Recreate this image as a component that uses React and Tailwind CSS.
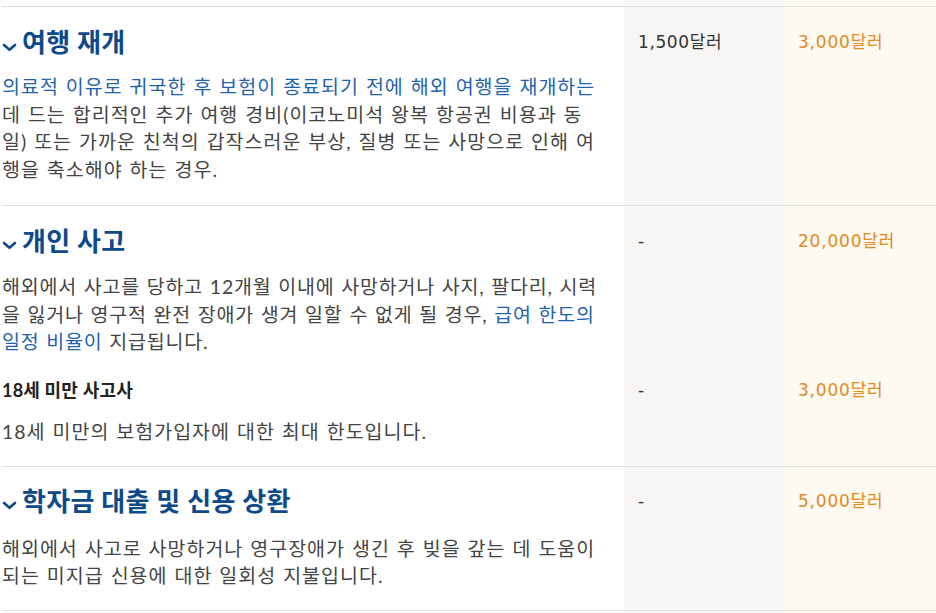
import React from "react";

const Chevron = () => (
  <svg
    width="15"
    height="9"
    viewBox="0 0 15 9"
    className="mr-[5px] mt-[10px] shrink-0"
    fill="none"
    stroke="#0d4a8a"
    strokeWidth="2.6"
    strokeLinecap="round"
    strokeLinejoin="round"
  >
    <path d="M2 2 L7.5 6.8 L13 2" />
  </svg>
);

const Link = ({ children }) => (
  <a href="#" className="text-[#1f63ad]">
    {children}
  </a>
);

const valueFont = { fontFamily: "'DejaVu Sans', 'Noto Sans CJK KR', sans-serif" };

function Cells({ left, mid, right, border, pt = "pt-[19px]", pb = "pb-[20px]" }) {
  const line = border ? "border-t border-[#dedede]" : "";
  return (
    <>
      <div className={`${line} ${pt} ${pb} pr-[20px]`}>{left}</div>
      <div
        className={`${line} ${pt} bg-[#f7f6f4] pl-[14px] text-[17px] leading-[32px] tracking-[0.6px] text-[#333]`}
        style={valueFont}
      >
        {mid}
      </div>
      <div
        className={`${line} ${pt} bg-[#fef9f1] pl-[15px] text-[17px] leading-[32px] tracking-[0.8px] text-[#e08a1e]`}
        style={valueFont}
      >
        {right}
      </div>
    </>
  );
}

const Title = ({ children }) => (
  <h3 className="flex items-center text-[26px] leading-[32px] font-bold tracking-[0.3px] text-[#0d4a8a]">
    <Chevron />
    {children}
  </h3>
);

const Body = ({ children, className = "", tracking = "tracking-[1px]" }) => (
  <p
    className={`whitespace-nowrap text-[19.5px] leading-[27.7px] text-[#444] ${tracking} [word-spacing:1px] ${className}`}
  >
    {children}
  </p>
);

export default function App() {
  return (
    <div
      className="w-[936px] h-[613px] overflow-hidden bg-white pl-[2px]"
      style={{ fontFamily: "Lato, 'Noto Sans CJK KR', sans-serif" }}
    >
      <div className="grid grid-cols-[622px_159px_153px]">
        {/* top spacer */}
        <div className="h-[6px]" />
        <div className="h-[6px] bg-[#f7f6f4]" />
        <div className="h-[6px] bg-[#fef9f1]" />

        <Cells
          border
          pb="pb-[21px]"
          left={
            <>
              <Title>여행 재개</Title>
              <Body className="mt-[15px]">
                <Link>의료적 이유로 귀국한 후 보험이 종료되기 전에 해외 여행을 재개하는</Link>
                <br />
                데 드는 합리적인 추가 여행 경비(이코노미석 왕복 항공권 비용과 동
                <br />
                일) 또는 가까운 친척의 갑작스러운 부상, 질병 또는 사망으로 인해 여
                <br />
                행을 축소해야 하는 경우.
              </Body>
            </>
          }
          mid="1,500달러"
          right="3,000달러"
        />

        <Cells
          border
          pb="pb-0"
          left={
            <>
              <Title>개인 사고</Title>
              <Body className="mt-[16px]" tracking="tracking-[0.8px]">
                해외에서 사고를 당하고 12개월 이내에 사망하거나 사지, 팔다리, 시력
                <br />
                을 잃거나 영구적 완전 장애가 생겨 일할 수 없게 될 경우, <Link>급여 한도의</Link>
                <br />
                <Link>일정 비율이</Link> 지급됩니다.
              </Body>
            </>
          }
          mid="-"
          right="20,000달러"
        />

        <Cells
          pt="pt-[18px]"
          pb="pb-[20px]"
          left={
            <>
              <h4 className="text-[18px] leading-[32px] font-bold tracking-[0.2px] text-[#222]">
                18세 미만 사고사
              </h4>
              <Body className="mt-[12px]">18세 미만의 보험가입자에 대한 최대 한도입니다.</Body>
            </>
          }
          mid="-"
          right="3,000달러"
        />

        <Cells
          border
          pt="pt-[18px]"
          left={
            <>
              <Title>학자금 대출 및 신용 상환</Title>
              <Body className="mt-[18px]">
                해외에서 사고로 사망하거나 영구장애가 생긴 후 빚을 갚는 데 도움이
                <br />
                되는 미지급 신용에 대한 일회성 지불입니다.
              </Body>
            </>
          }
          mid="-"
          right="5,000달러"
        />

        {/* bottom edge */}
        <div className="h-[6px] border-t border-[#dedede]" />
        <div className="h-[6px] border-t border-[#dedede] bg-[#f7f6f4]" />
        <div className="h-[6px] border-t border-[#dedede] bg-[#fef9f1]" />
      </div>
    </div>
  );
}
